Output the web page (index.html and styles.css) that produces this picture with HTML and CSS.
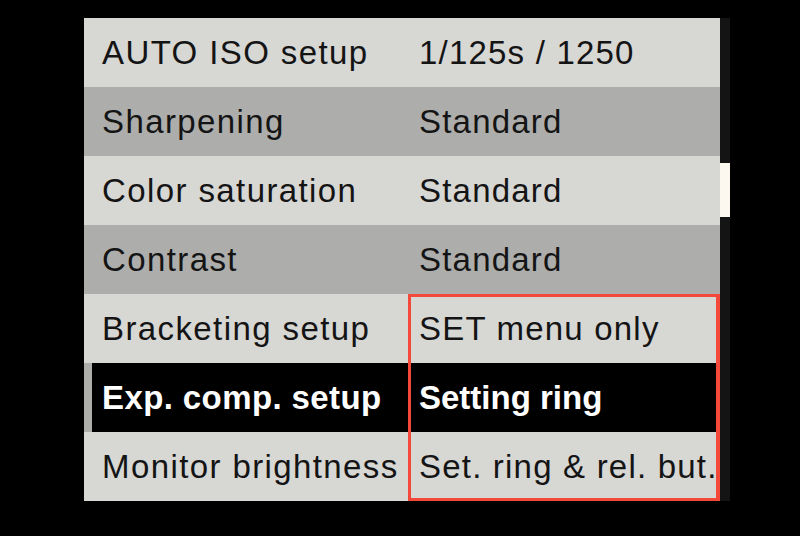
FILE: index.html
```html
<!DOCTYPE html>
<html lang="en">
<head>
    <meta charset="UTF-8">
    <meta name="viewport" content="width=device-width, initial-scale=1.0">
    <title>Custom settings</title>
    <link rel="stylesheet" href="styles.css">
</head>

<body>
    <div class="screen">
        <!-- menu list -->
        <div class="menu">
            <div class="row light">
                <div class="label">AUTO ISO setup</div>
                <div class="value">1/125s / 1250</div>
            </div>
            <div class="row gray">
                <div class="label">Sharpening</div>
                <div class="value">Standard</div>
            </div>
            <div class="row light">
                <div class="label">Color saturation</div>
                <div class="value">Standard</div>
            </div>
            <div class="row gray">
                <div class="label">Contrast</div>
                <div class="value">Standard</div>
            </div>

            <!-- options of the current item (red frame) -->
            <div class="row light">
                <div class="label">Bracketing setup</div>
                <div class="value framed frame-top">SET menu only</div>
            </div>
            <div class="row selected">
                <div class="label">Exp. comp. setup</div>
                <div class="value framed">Setting ring</div>
            </div>
            <div class="row light">
                <div class="label">Monitor brightness</div>
                <div class="value framed frame-bottom">Set. ring &amp; rel. but.</div>
            </div>
        </div>

        <!-- scroll bar -->
        <div class="scroll">
            <div class="thumb"></div>
        </div>
    </div>
</body>
</html>
```

FILE: styles.css
```css
body {
    margin: 0;
    background: #000;
    font-family: "Liberation Sans", Arial, sans-serif;
}

.screen {
    display: flex;
    padding: 18px 0 0 84px;
}

.menu {
    width: 636px;
}

.row {
    display: grid;
    grid-template-columns: 324px 1fr;
    height: 69px;
    font-size: 33px;
    line-height: 69px;
    letter-spacing: 1.4px;
    color: #141414;
    white-space: nowrap;
}

.light { background: #d7d7d4; }
.gray  { background: #adadab; }

.label {
    padding-left: 18px;
}

.value {
    padding-left: 11px;
    letter-spacing: 1.2px;
}

/* selected row: black bar, gray cursor strip on the left */
.selected {
    background: #000;
    color: #fff;
    font-weight: bold;
    letter-spacing: 0.4px;
}
.selected .label {
    border-left: 8px solid #adadab;
    padding-left: 10px;
}
.selected .value {
    letter-spacing: 0;
}

/* red frame round the choices */
.framed {
    box-shadow: inset 3px 0 #f4493a, inset -4px 0 #f4493a;
}
.frame-top {
    box-shadow: inset 3px 0 #f4493a, inset -4px 0 #f4493a, inset 0 3px #f4493a;
}
.frame-bottom {
    box-shadow: inset 3px 0 #f4493a, inset -4px 0 #f4493a, inset 0 -3px #f4493a;
}

.scroll {
    width: 10px;
    height: 483px;
    background: #141414;
}

.thumb {
    margin-top: 145px;
    height: 54px;
    background: #fdf8ef;
}
```
